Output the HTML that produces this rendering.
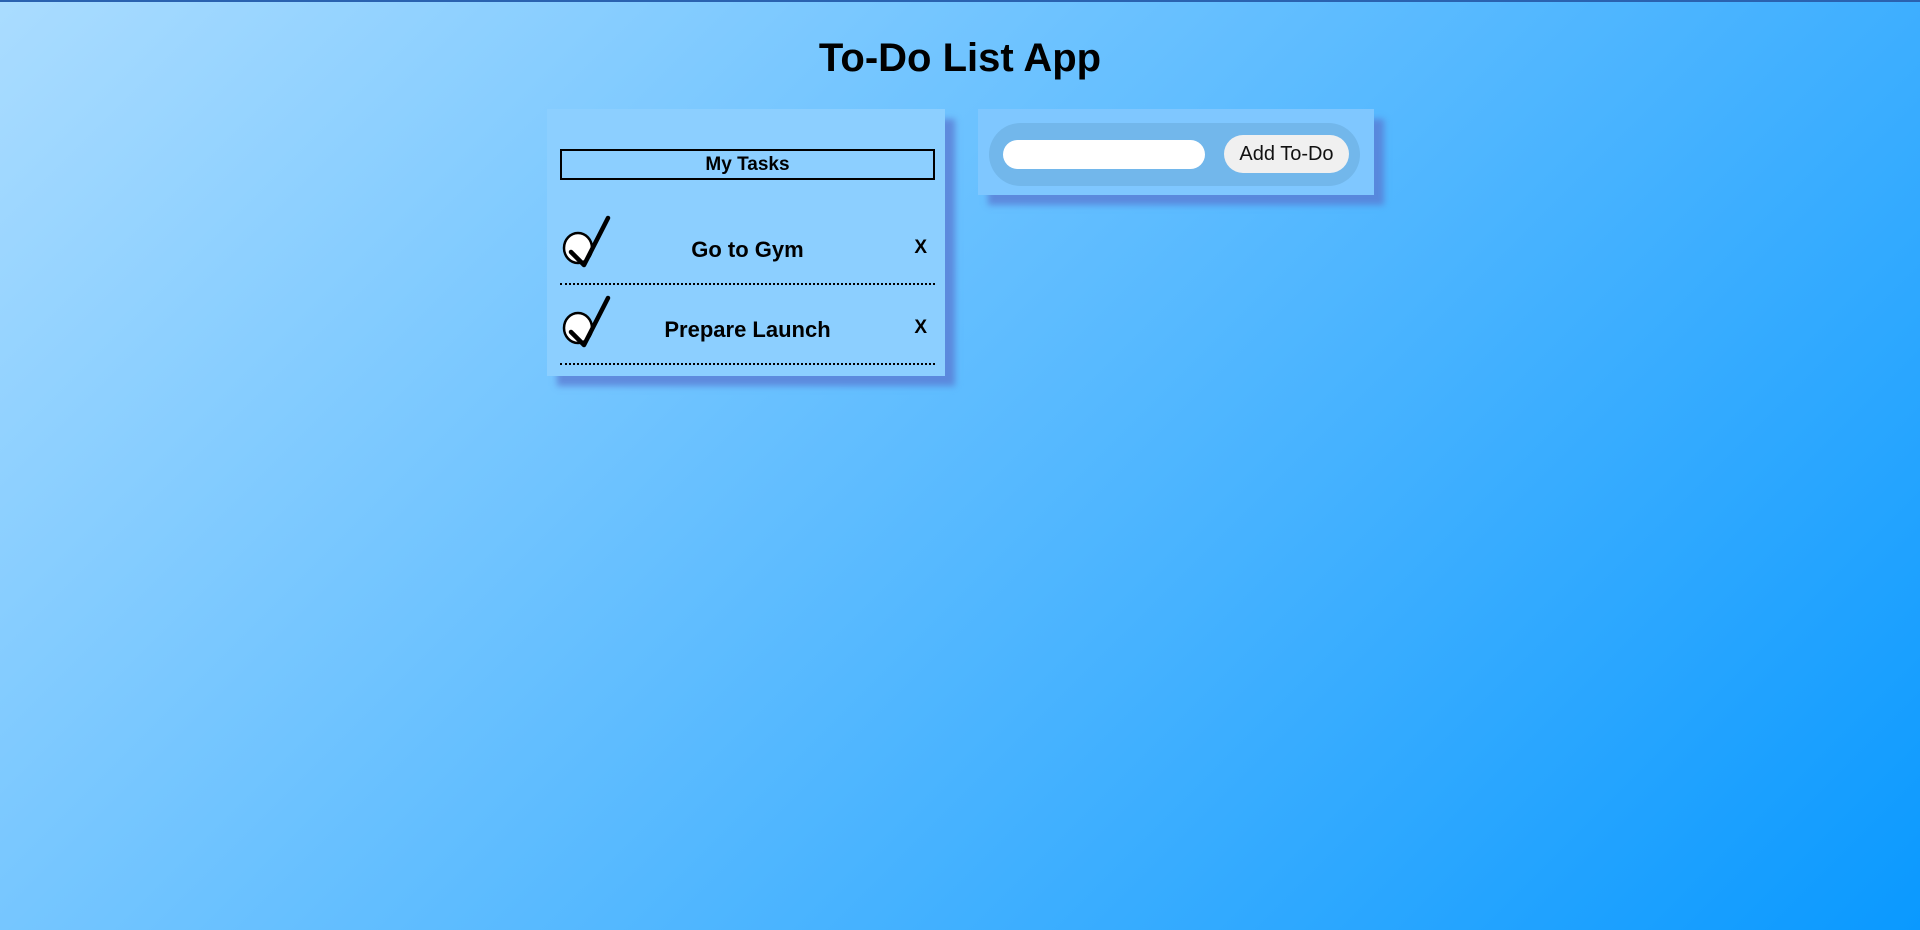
<!DOCTYPE html>
<html><head><meta charset="utf-8"><style>
html,body{margin:0;padding:0;}
body{width:1920px;height:930px;overflow:hidden;position:relative;font-family:"Liberation Sans",sans-serif;
background:linear-gradient(135deg,#aadcff 0%,#0a99ff 100%);border-top:2px solid #2a62b0;box-sizing:border-box;}
h1{position:absolute;top:34px;left:0;width:1920px;text-align:center;margin:0;font-size:40px;font-weight:bold;color:#000;}
.panel{position:absolute;box-shadow:10px 10px 6px rgba(90,120,210,0.75);}
.lp{left:547px;top:107px;width:398px;height:267px;background:#8ccfff;}
.rp{left:978px;top:107px;width:396px;height:86px;background:#7fc7ff;}
.mt{position:absolute;left:13px;top:40px;width:371px;height:27px;border:2px solid #000;text-align:center;font-weight:bold;font-size:19px;line-height:28px;}
.item{position:absolute;left:13px;width:375px;height:67px;border-bottom:2px dotted #000;}
.item .t{position:absolute;left:0;width:375px;text-align:center;font-weight:bold;font-size:22px;top:21px;}
.item .x{position:absolute;right:8px;top:21px;font-weight:bold;font-size:19px;}
.item svg{position:absolute;left:1px;top:-2px;}
.pill{position:absolute;left:11px;top:14px;width:371px;height:63px;border-radius:32px;background:#72b7eb;}
.inp{position:absolute;left:14px;top:17px;width:202px;height:29px;border-radius:15px;background:#fff;}
.btn{position:absolute;left:235px;top:12px;width:125px;height:38px;border-radius:19px;background:#f0f0f0;font-size:20px;line-height:38px;text-align:center;color:#111;}
</style></head><body>
<h1>To-Do List App</h1>
<div class="panel lp">
<div class="mt">My Tasks</div>
<div class="item" style="top:107px">
<svg width="52" height="56" viewBox="0 0 52 56"><ellipse cx="17" cy="34" rx="14" ry="15" fill="#fff" stroke="#000" stroke-width="2.5"/><path d="M10 38 L23 51 L47 4" fill="none" stroke="#000" stroke-width="4.5" stroke-linecap="round" stroke-linejoin="round"/></svg>
<div class="t">Go to Gym</div><div class="x">X</div></div>
<div class="item" style="top:187px">
<svg width="52" height="56" viewBox="0 0 52 56"><ellipse cx="17" cy="34" rx="14" ry="15" fill="#fff" stroke="#000" stroke-width="2.5"/><path d="M10 38 L23 51 L47 4" fill="none" stroke="#000" stroke-width="4.5" stroke-linecap="round" stroke-linejoin="round"/></svg>
<div class="t">Prepare Launch</div><div class="x">X</div></div>
</div>
<div class="panel rp"><div class="pill"><div class="inp"></div><div class="btn">Add To-Do</div></div></div>
</body></html>
